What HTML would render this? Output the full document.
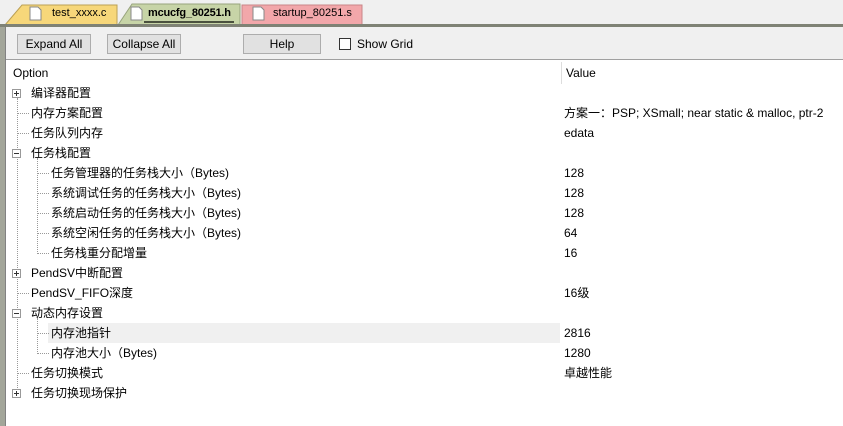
<!DOCTYPE html>
<html><head><meta charset="utf-8"><style>
body{margin:0;width:843px;height:426px;overflow:hidden;background:#fff;font-family:"Liberation Sans","Noto Sans CJK SC",sans-serif;font-size:12px;color:#000;position:relative}
.a{position:absolute}
.btn{position:absolute;top:34px;height:20px;background:#e1e1e1;border:1px solid #adadad;box-sizing:border-box;text-align:center;line-height:18px;font-size:12px}
.row{position:absolute;height:20px;line-height:20px;white-space:nowrap}
.v{position:absolute;left:564px;height:20px;line-height:20px;white-space:nowrap}
.box{position:absolute;left:12px;width:9px;height:9px;border:1px solid #999;box-sizing:border-box;background:#fff}
.box:before{content:"";position:absolute;left:1px;top:3px;width:5px;height:1px;background:#333}
.box.p:after{content:"";position:absolute;left:3px;top:1px;width:1px;height:5px;background:#333}
.dh{position:absolute;height:0;border-top:1px dotted #999}
</style></head><body>
<div class="a" style="left:0;top:0;width:843px;height:25px;background:#f0f0f0"></div>
<svg class="a" style="left:0;top:0" width="843" height="27">
<polygon points="5,25 22,5 117,5 117,25" fill="#f7d77a" stroke="#bba055"/>
<polygon points="118,25 132,4 240,4 240,25" fill="#c7d4a7" stroke="#97a37c"/>
<polygon points="242,25 242,5 362,5 362,25" fill="#f2a7aa" stroke="#c98688"/>
<rect x="0" y="24" width="843" height="3" fill="#7f8275"/>
<g fill="#fff" stroke="#888"><path d="M30 7h8l3 3v10h-11z"/><path d="M131 7h8l3 3v10h-11z"/><path d="M253 7h8l3 3v10h-11z"/></g>
<line x1="144" y1="22" x2="234" y2="22" stroke="#000" stroke-width="1.2"/>
</svg>
<div class="a" style="left:52px;top:5px;line-height:17px;font-size:11px">test_xxxx.c</div>
<div class="a" style="left:148px;top:5px;line-height:17px;font-weight:bold;font-size:11px;letter-spacing:-0.2px">mcucfg_80251.h</div>
<div class="a" style="left:273px;top:5px;line-height:17px;font-size:11px">startup_80251.s</div>
<div class="a" style="left:0;top:27px;width:5px;height:399px;background:#a3a69a"></div>
<div class="a" style="left:5px;top:27px;width:838px;height:32px;background:#f0f0f0;border-bottom:1px solid #a0a0a0"></div>
<div class="a" style="left:5px;top:27px;width:1px;height:399px;background:#828282"></div>
<div class="btn" style="left:17px;width:74px">Expand All</div>
<div class="btn" style="left:107px;width:74px">Collapse All</div>
<div class="btn" style="left:243px;width:78px">Help</div>
<div class="a" style="left:339px;top:38px;width:12px;height:12px;border:1px solid #333;box-sizing:border-box;background:#fff"></div>
<div class="a" style="left:357px;top:36px;line-height:16px">Show Grid</div>
<div class="a" style="left:13px;top:63px;line-height:20px">Option</div>
<div class="a" style="left:561px;top:62px;width:1px;height:22px;background:#ddd"></div>
<div class="a" style="left:566px;top:63px;line-height:20px">Value</div>
<div class="a" style="left:48px;top:323px;width:512px;height:20px;background:#f0f0f0"></div>
<div class="a" style="left:17px;top:98px;height:296px;border-left:1px dotted #999"></div>
<div class="a" style="left:37px;top:158px;height:96px;border-left:1px dotted #999"></div>
<div class="a" style="left:37px;top:318px;height:36px;border-left:1px dotted #999"></div>
<div class="box p" style="top:89px"></div><div class="row" style="left:31px;top:83px">编译器配置</div>
<div class="dh" style="left:18px;top:113px;width:11px"></div><div class="row" style="left:31px;top:103px">内存方案配置</div><div class="v" style="top:103px">方案一：PSP; XSmall; near static &amp; malloc, ptr-2</div>
<div class="dh" style="left:18px;top:133px;width:11px"></div><div class="row" style="left:31px;top:123px">任务队列内存</div><div class="v" style="top:123px">edata</div>
<div class="box" style="top:149px"></div><div class="row" style="left:31px;top:143px">任务栈配置</div>
<div class="dh" style="left:38px;top:173px;width:11px"></div><div class="row" style="left:51px;top:163px">任务管理器的任务栈大小（Bytes)</div><div class="v" style="top:163px">128</div>
<div class="dh" style="left:38px;top:193px;width:11px"></div><div class="row" style="left:51px;top:183px">系统调试任务的任务栈大小（Bytes)</div><div class="v" style="top:183px">128</div>
<div class="dh" style="left:38px;top:213px;width:11px"></div><div class="row" style="left:51px;top:203px">系统启动任务的任务栈大小（Bytes)</div><div class="v" style="top:203px">128</div>
<div class="dh" style="left:38px;top:233px;width:11px"></div><div class="row" style="left:51px;top:223px">系统空闲任务的任务栈大小（Bytes)</div><div class="v" style="top:223px">64</div>
<div class="dh" style="left:38px;top:253px;width:11px"></div><div class="row" style="left:51px;top:243px">任务栈重分配增量</div><div class="v" style="top:243px">16</div>
<div class="box p" style="top:269px"></div><div class="row" style="left:31px;top:263px">PendSV中断配置</div>
<div class="dh" style="left:18px;top:293px;width:11px"></div><div class="row" style="left:31px;top:283px">PendSV_FIFO深度</div><div class="v" style="top:283px">16级</div>
<div class="box" style="top:309px"></div><div class="row" style="left:31px;top:303px">动态内存设置</div>
<div class="dh" style="left:38px;top:333px;width:11px"></div><div class="row" style="left:51px;top:323px">内存池指针</div><div class="v" style="top:323px">2816</div>
<div class="dh" style="left:38px;top:353px;width:11px"></div><div class="row" style="left:51px;top:343px">内存池大小（Bytes)</div><div class="v" style="top:343px">1280</div>
<div class="dh" style="left:18px;top:373px;width:11px"></div><div class="row" style="left:31px;top:363px">任务切换模式</div><div class="v" style="top:363px">卓越性能</div>
<div class="box p" style="top:389px"></div><div class="row" style="left:31px;top:383px">任务切换现场保护</div>
</body></html>
